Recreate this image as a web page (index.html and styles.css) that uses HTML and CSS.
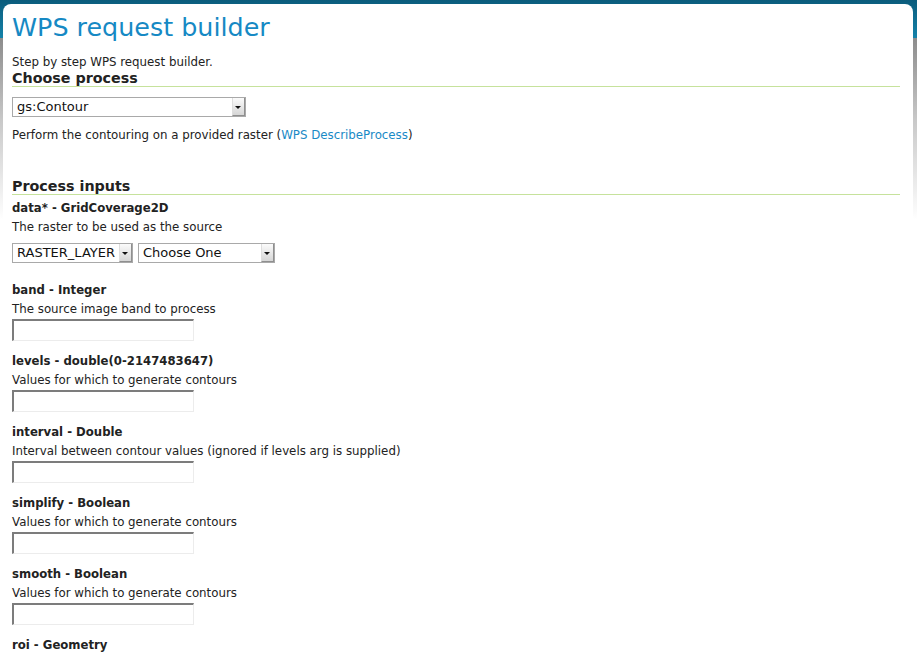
FILE: index.html
```html
<!DOCTYPE html>
<html>
<head>
<meta charset="utf-8">
<title>WPS request builder</title>
<link rel="stylesheet" href="styles.css">
</head>
<body>
<div class="page">
  <div class="panel">
    <h1 class="title">WPS request builder</h1>
    <p class="text intro">Step by step WPS request builder.</p>
    <h2 class="section">Choose process</h2>
    <div class="sel-row first">
      <span class="sel"><select class="w-process"><option>gs:Contour</option></select></span>
    </div>
    <p class="text perform">Perform the contouring on a provided raster (<a class="link" href="#">WPS DescribeProcess</a>)</p>
    <h2 class="section inputs">Process inputs</h2>

    <div class="field">
      <div class="label">data* - GridCoverage2D</div>
      <div class="desc">The raster to be used as the source</div>
      <div class="sel-row pair">
        <span class="sel"><select class="w-type"><option>RASTER_LAYER</option></select></span>
        <span class="sel"><select class="w-choose"><option>Choose One</option></select></span>
      </div>
    </div>

    <div class="field">
      <div class="label">band - Integer</div>
      <div class="desc">The source image band to process</div>
      <input class="box" type="text">
    </div>

    <div class="field">
      <div class="label">levels - double(0-2147483647)</div>
      <div class="desc">Values for which to generate contours</div>
      <input class="box" type="text">
    </div>

    <div class="field">
      <div class="label">interval - Double</div>
      <div class="desc">Interval between contour values (ignored if levels arg is supplied)</div>
      <input class="box" type="text">
    </div>

    <div class="field">
      <div class="label">simplify - Boolean</div>
      <div class="desc">Values for which to generate contours</div>
      <input class="box" type="text">
    </div>

    <div class="field">
      <div class="label">smooth - Boolean</div>
      <div class="desc">Values for which to generate contours</div>
      <input class="box" type="text">
    </div>

    <div class="field">
      <div class="label">roi - Geometry</div>
    </div>
  </div>
</div>
</body>
</html>
```
FILE: styles.css
```css
html, body {
  margin: 0;
  padding: 0;
  background: #ffffff;
}

body {
  font-family: "DejaVu Sans", Verdana, sans-serif;
  font-size: 13px;
  color: #222222;
}

.page {
  min-height: 100vh;
  padding: 4px 4px 0 3px;
  box-sizing: border-box;
  background:
    linear-gradient(to bottom, #0b5c7c 0px, #1482a9 38px, #8c8c8c 38px, #c8c8c8 120px, #ffffff 220px) no-repeat;
  background-size: 100% 220px;
  background-color: #ffffff;
}

.panel {
  background: #ffffff;
  border-radius: 8px 8px 0 0;
  padding: 0 13px 0 9px;
  min-height: 652px;
  box-sizing: border-box;
}

.title {
  margin: 0;
  padding-top: 8px;
  font-size: 25.4px;
  line-height: 30px;
  font-weight: normal;
  color: #1689c4;
}

.text {
  margin: 0;
  font-size: 11.82px;
  line-height: 17px;
}

.intro {
  margin-top: 12px;
}

.section {
  margin: 0;
  font-size: 14.3px;
  line-height: 14px;
  font-weight: bold;
  color: #222222;
  padding-bottom: 1px;
  border-bottom: 1px solid #c6e29c;
}

.inputs {
  margin-top: 35px;
}

.link {
  color: #1a8ac6;
  text-decoration: none;
}

.sel-row {
  display: flex;
  gap: 5px;
}

.sel-row.first {
  margin: 10px 0 10px;
}

.sel-row.pair {
  margin: 6px 0 18px;
}

.sel {
  position: relative;
  display: inline-block;
  height: 20px;
}

.sel select {
  -webkit-appearance: none;
  appearance: none;
  box-sizing: border-box;
  height: 20px;
  margin: 0;
  padding: 0 16px 0 4px;
  border: 1px solid #a9a9a9;
  border-radius: 0;
  background: #ffffff;
  font-family: "DejaVu Sans", Verdana, sans-serif;
  font-size: 13px;
  line-height: 18px;
  color: #111111;
  display: block;
}

.sel::after {
  content: "";
  position: absolute;
  top: 1px;
  right: 1px;
  bottom: 1px;
  width: 13px;
  background: linear-gradient(to bottom, #fbfbfb, #d6d6d6);
  border-left: 1px solid #dedede;
  border-right: 1px solid #8f8f8f;
  border-bottom: 1px solid #8f8f8f;
  box-sizing: border-box;
  pointer-events: none;
}

.sel::before {
  content: "";
  position: absolute;
  top: 9px;
  right: 5px;
  width: 0;
  height: 0;
  border-left: 3px solid transparent;
  border-right: 3px solid transparent;
  border-top: 3px solid #111111;
  z-index: 1;
  pointer-events: none;
}

.w-process { width: 234px; }
.w-type { width: 121px; }
.w-choose { width: 137px; }

.field {
  margin-top: 4px;
  margin-bottom: 11px;
}

.field + .field {
  margin-top: 0;
}

.label {
  font-size: 11.7px;
  line-height: 19px;
  font-weight: bold;
}

.desc {
  font-size: 11.82px;
  line-height: 19px;
}

.box {
  display: block;
  box-sizing: border-box;
  width: 182px;
  height: 22px;
  margin: 0 0 11px;
  padding: 0 3px;
  border-top: 2px solid #7c7c7c;
  border-left: 2px solid #7c7c7c;
  border-right: 1px solid #ececec;
  border-bottom: 1px solid #ececec;
  background: #ffffff;
  font-family: "DejaVu Sans", Verdana, sans-serif;
  font-size: 12px;
}
```
